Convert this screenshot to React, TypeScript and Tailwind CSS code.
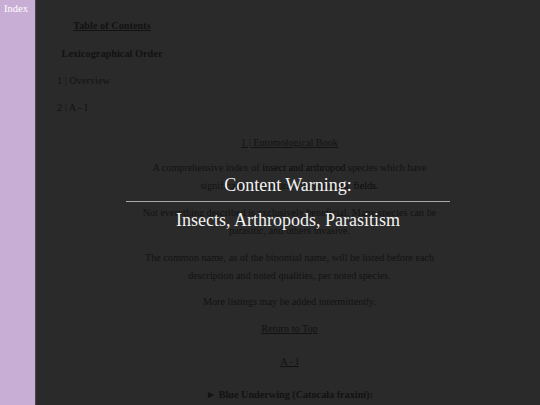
import React from "react";

export default function App() {
  const serif = { fontFamily: '"Liberation Serif", "Times New Roman", serif' } as React.CSSProperties;
  return (
    <div className="flex h-[405px] w-[540px] overflow-hidden bg-[#2a2a2a]" style={serif}>
      <div className="w-[36px] shrink-0 bg-[#c8aed4] border-r border-[#4a4650]">
        <div className="pl-[4px] pt-[2px] text-[10.5px] leading-[14px] text-white">Index</div>
      </div>
      <div className="relative flex-1 bg-[#2a2a2a] text-[#121212]">
        <div className="ml-[21px] w-[110px] text-center">
          <div className="mt-[17px] text-[10.3px] font-bold leading-[18px] underline">Table of Contents</div>
          <div className="mt-[10px] text-[10.3px] font-bold leading-[18px] whitespace-nowrap">Lexicographical Order</div>
          <div className="mt-[9px] text-left text-[10.3px] leading-[18px]">1 | Overview</div>
          <div className="mt-[9px] text-left text-[10.3px] leading-[18px]">2 | A - I</div>
        </div>
        <div className="pl-[3px] text-center text-[10.2px] leading-[18px]">
          <div className="mt-[17px] underline">1 | Entomological Book</div>
          <div className="mt-[7px]">
            A comprehensive index of <span className="text-[#0a0a0a]">insect and arthropod</span> species which have
            <br />
            significance in cultural and scientific <span className="text-[#0a0a0a]">fields.</span>
          </div>
          <div className="mt-[9px]">
            Not everything described is exclusively beneficial. Many species can be
            <br />
            parasitic, and others invasive.
          </div>
          <div className="mt-[9px]">
            The common name, as of the binomial name, will be listed before each
            <br />
            description and noted qualities, per noted species.
          </div>
          <div className="mt-[8px]">More listings may be added intermittently.</div>
          <div className="mt-[9px] underline">Return to Top</div>
          <div className="mt-[15px] underline">A - I</div>
          <div className="mt-[15px] font-bold">► Blue Underwing (Catocala fraxini):</div>
        </div>
        <div className="absolute left-[90px] top-[172px] w-[324px] text-center text-[#f2f2f2]">
          <div className="text-[18px] leading-[26px]">Content Warning:</div>
          <div className="mt-[3px] h-px w-full bg-[#a8a8a8]" />
          <div className="mt-[5px] text-[18px] leading-[26px]">Insects, Arthropods, Parasitism</div>
        </div>
      </div>
    </div>
  );
}
